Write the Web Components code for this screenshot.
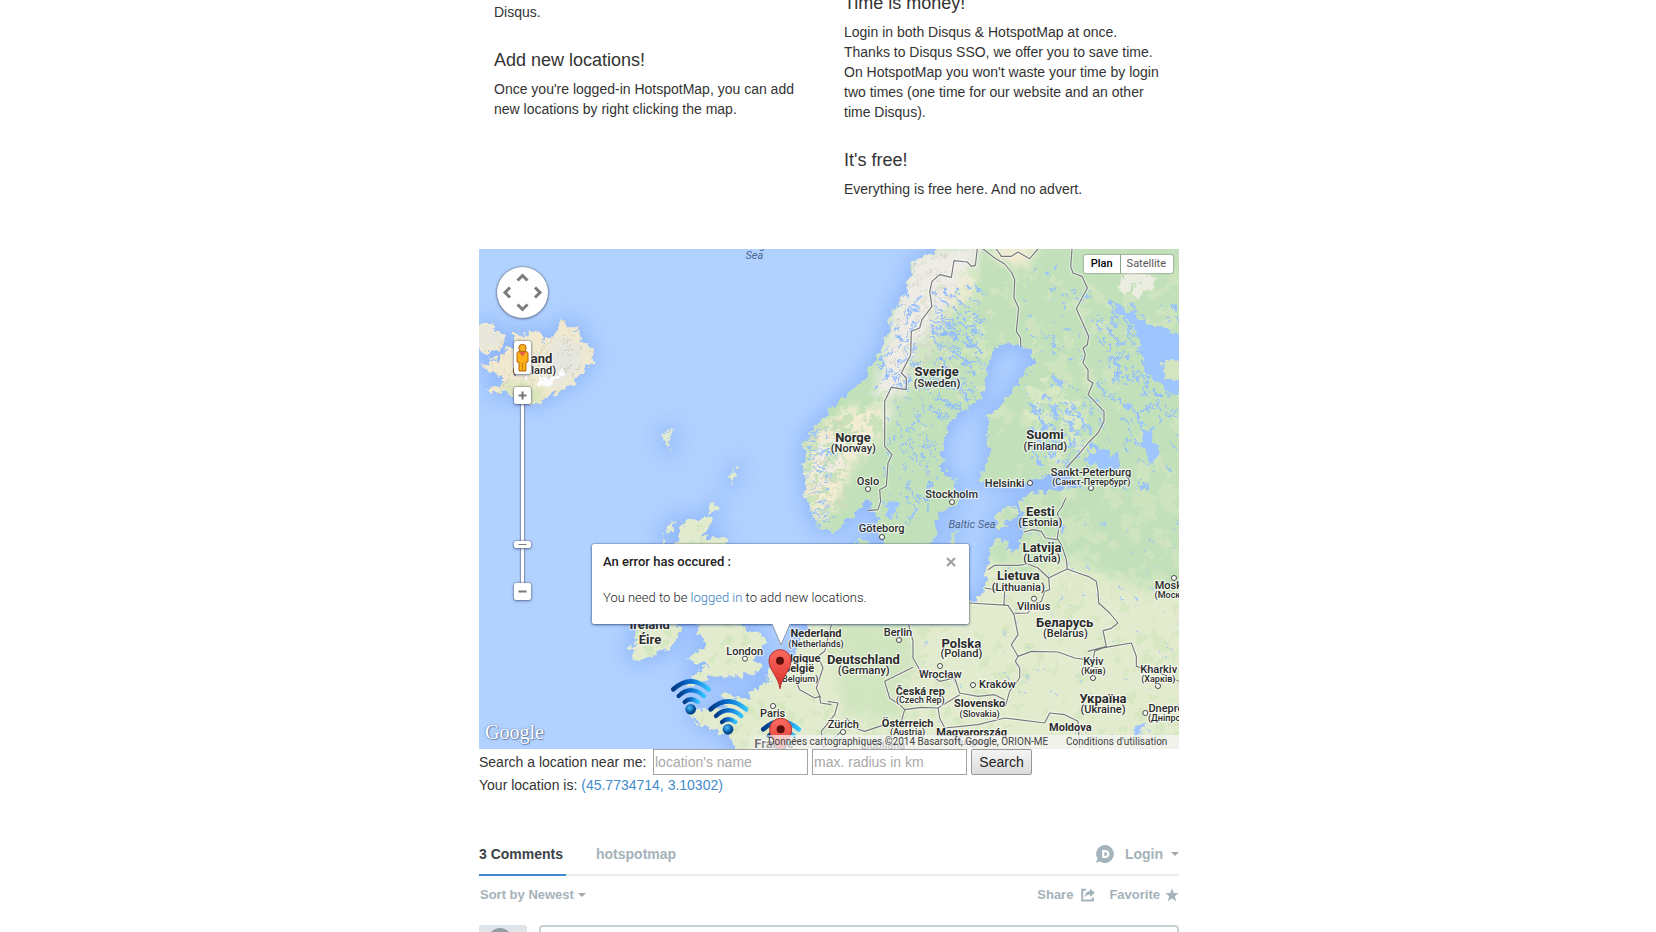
<!DOCTYPE html>
<html lang="en">
<head>
<meta charset="utf-8">
<title>HotspotMap</title>
<style>
  html, body { margin: 0; padding: 0; background: #fff; }
  body { font: 14px/20px "Liberation Sans", Arial, sans-serif; color: #333; height: 100vh; overflow: hidden; }
</style>
</head>
<body>
<hotspot-page></hotspot-page>

<template id="tpl-page">
  <style>
    :host { display: block; max-width: 700px; margin: 0 auto; padding-left: 2px; }
    .marketing { display: grid; grid-template-columns: 1fr 1fr; margin: -7px 0 50px; }
    .col { padding: 0 15px; display: flex; flex-direction: column; gap: 28px; }
    .tail { margin: 9px 0 0; }
  </style>
  <div class="marketing">
    <div class="col">
      <p class="tail">Disqus.</p>
      <info-block><span slot="title">Add new locations!</span>Once you're logged-in HotspotMap, you can add new locations by right clicking the map.</info-block>
    </div>
    <div class="col">
      <info-block><span slot="title">Time is money!</span>Login in both Disqus &amp; HotspotMap at once. Thanks to Disqus SSO, we offer you to save time. On HotspotMap you won't waste your time by login two times (one time for our website and an other time Disqus).</info-block>
      <info-block><span slot="title">It's free!</span>Everything is free here. And no advert.</info-block>
    </div>
  </div>
  <map-view>
    <map-popup>
      <span slot="title">An error has occured :</span>
      You need to be <a href="#login">logged in</a> to add new locations.
    </map-popup>
  </map-view>
  <location-search></location-search>
  <comment-thread></comment-thread>
</template>

<template id="tpl-info">
  <style>
    :host { display: block; }
    h4 { font-size: 18px; line-height: 20px; font-weight: 400; margin: 0 0 9px; }
    p { margin: 0; }
  </style>
  <h4><slot name="title"></slot></h4>
  <p><slot></slot></p>
</template>

<template id="tpl-popup">
  <style>
    :host { display: block; width: 377px; box-sizing: border-box; background: #fff; border-radius: 2px; padding: 9px 11px;
      height: 80px; font: 300 13px/18px Roboto, sans-serif; color: #222; box-shadow: 0 0 2px rgba(0,0,0,.5), 0 1px 3px rgba(30,60,130,.6); }
    header { display: flex; justify-content: space-between; align-items: center; height: 18px; margin-bottom: 18px; }
    strong { font-weight: 500; }
    button { border: 0; background: none; padding: 0; margin-right: 2px; height: 10px; width: 10px; display: block; }
    ::slotted(a) { color: #2f7cc0; text-decoration: none; }
    .tip { position: absolute; left: 178px; top: 79px; }
    svg { display: block; }
  </style>
  <header><strong><slot name="title"></slot></strong>
    <button aria-label="Close"><svg width="10" height="10" viewBox="0 0 10 10"><path d="M1 1l8 8M9 1l-8 8" stroke="#a2a2a2" stroke-width="2.2"/></svg></button>
  </header>
  <slot></slot>
  <svg class="tip" width="22" height="25" viewBox="0 0 22 25"><path d="M2 1L11 22L20 1" fill="#fff" stroke="#8e9aa8" stroke-width="1"/><path d="M2 0h18v1H2z" fill="#fff"/></svg>
</template>

<template id="tpl-search">
  <style>
    :host { display: block; margin-bottom: 50px; }
    form { display: flex; align-items: center; gap: 4px; height: 26px; }
    label { min-width: 170px; }
    input, button { font: inherit; box-sizing: border-box; height: 26px; margin: 0; }
    input { width: 155px; border: 1px solid #a3a3a3; padding: 0 1px; color: #333; min-width: 0; }
    input::placeholder { color: #a9a9a9; opacity: 1; }
    button { width: 61px; padding: 0; border: 1px solid #989898; border-radius: 2px; background: linear-gradient(#f4f4f4, #dcdcdc); color: #222; }
    p { margin: 0; }
    a { color: #428bca; text-decoration: none; }
  </style>
  <form>
    <label for="place">Search a location near me:</label>
    <input id="place" type="text" placeholder="location's name">
    <input type="text" aria-label="Radius" placeholder="max. radius in km">
    <button type="button">Search</button>
  </form>
  <p>Your location is: <a href="#here">(45.7734714, 3.10302)</a></p>
</template>

<template id="tpl-thread">
  <style>
    :host { display: block; font-weight: 700; color: #a5b2b9; }
    nav, .tools, .user, .right, .compose { display: flex; align-items: center; }
    nav { justify-content: space-between; border-bottom: 2px solid #e7eded; height: 29px; align-items: flex-start; }
    .tabs { display: flex; gap: 30px; line-height: 18px; }
    a { color: inherit; text-decoration: none; }
    .tabs a { height: 29px; border-bottom: 2px solid transparent; min-width: 87px; }
    .tabs .on { color: #3b4247; border-color: #4389cd; }
    button { all: unset; display: flex; align-items: center; }
    .user { gap: 10px; margin-top: -1px; }
    .user button { gap: 8px; }
    .tools { justify-content: space-between; font-size: 13px; height: 18px; margin: 10px 0 21px 1px; }
    .sort { gap: 4px; }
    .right { gap: 14px; }
    .fav { gap: 5px; } .share { gap: 8px; }
    .caret { width: 0; border: 4px solid transparent; border-top-color: #a5a9ac; border-bottom: 0; }
    .compose { align-items: flex-start; gap: 12px; }
    .avatar { width: 48px; height: 48px; border-radius: 3px; background: #dfe5e8; flex: none; }
    textarea { flex: 1; height: 70px; box-sizing: border-box; border: 2px solid #c8d1d5; border-radius: 4px; resize: none; min-width: 0; }
    svg { display: block; }
  </style>
  <nav>
    <div class="tabs"><a class="on" href="#comments">3 Comments</a><a href="#site">hotspotmap</a></div>
    <div class="user">
      <svg width="20" height="20" viewBox="0 0 20 20"><path d="M10.4 1A9 9 0 1 1 5 17.6L.8 18.8l1.8-4A9 9 0 0 1 10.4 1z" fill="#a5b4bc"/><path d="M8.2 7.1h1.9c2 0 3.2 1.1 3.2 2.9s-1.200 3-3.200 3H8.200z" fill="none" stroke="#fff" stroke-width="2.200"/></svg>
      <button>Login <i class="caret"></i></button>
    </div>
  </nav>
  <div class="tools">
    <button class="sort">Sort by Newest <i class="caret"></i></button>
    <div class="right">
      <button class="share">Share <svg width="14" height="14" viewBox="0 0 14 14"><path d="M5 1.800H1.200v10.800h10.600V9.500" fill="none" stroke="#a5b4bc" stroke-width="2"/><path d="M9 0.500l4.800 4.200L9 9V6.600C6.400 6.500 5 7.400 3.800 9.800 4 5.800 5.800 3.200 9 3z" fill="#a5b4bc"/></svg></button>
      <button class="fav">Favorite <svg width="14" height="14" viewBox="0 0 14 14"><path d="M7 .3l1.700 4.600 5 .2-3.900 3.100 1.400 5L7 10.400l-4.200 2.800 1.400-5L.3 5.100l5-.2z" fill="#a5b4bc"/></svg></button>
    </div>
  </div>
  <div class="compose">
    <svg class="avatar" viewBox="0 0 48 48"><circle cx="21" cy="15" r="12" fill="#929da5"/><path d="M4 48c0-16 34-16 34 0z" fill="#929da5"/></svg>
    <textarea aria-label="Join the discussion"></textarea>
  </div>
</template>

<template id="tpl-map">
  <style>
    :host { display: block; position: relative; height: 500px; overflow: hidden; background: #b1d1ff; font-family: Roboto, sans-serif; }
    .geo { display: block; width: 100%; height: 100%; }
    .geo text { font-family: Roboto, sans-serif; text-anchor: middle; fill: #2c2c2c; paint-order: stroke; stroke: rgba(255,255,255,.65); stroke-width: 7px; stroke-linejoin: round; }
    .geo .c { font-size: 39px; font-weight: 700; }
    .geo .m { font-size: 33px; font-weight: 700; }
    .geo .p { font-size: 33px; font-weight: 500; }
    .geo .s { font-size: 27px; font-weight: 500; }
    .geo .w { font-size: 33px; font-style: italic; font-weight: 400; fill: #4d668c; stroke: none; }
    .ctl { position: absolute; left: 18px; top: 18px; width: 51px; display: flex; flex-direction: column; align-items: center; }
    .ctl button { border: 0; padding: 0; background: #fff; border-radius: 2px; box-shadow: 0 0 2px #555, 0 1px 3px rgba(30,50,110,.5); width: 17px; position: relative; }
    .ctl svg { display: block; }
    .ctl .pan { width: 51px; height: 51px; border-radius: 50%; margin-bottom: 23px; }
    .ctl .peg { height: 33px; margin-bottom: 13px; }
    .ctl .z { height: 17px; }
    .rail { width: 3px; height: 179px; background: #fff; box-shadow: 0 0 1px 1px #8295b9; display: flex; flex-direction: column; align-items: center; justify-content: flex-end; }
    .ctl .knob { height: 7px; margin-bottom: 35px; flex: none; }
    .type { position: absolute; top: 6px; right: 6px; display: flex; box-shadow: 0 0 2px #555; background: #fff; border-radius: 2px; }
    .type button { border: 0; background: none; height: 18px; font: 400 11px/18px Roboto, sans-serif; color: #565656; padding: 0 7px 0 6px; }
    .type .on { font-weight: 500; color: #000; border-right: 1px solid #86a588; padding: 0 7px; }
    .brand { position: absolute; left: 6px; bottom: 6px; font: 20px/22px "Liberation Serif", serif; color: #fff; text-shadow: 0 0 2px #56709c, 1px 1px 1px #7089b5; }
    .legal { position: absolute; right: 0; bottom: 0; display: flex; font-size: 10px; line-height: 14px; color: #444; background: linear-gradient(90deg, rgba(245,245,245,0), rgba(245,245,245,.75) 40px); padding: 0 6px 0 30px; gap: 12px; white-space: nowrap; }
    .legal span { min-width: 286px; }
    .legal a { color: #444; text-decoration: none; min-width: 107px; }
    ::slotted(map-popup) { position: absolute; left: calc(50% - 237px); top: 295px; }
  </style>
  <svg class="geo" viewBox="3 3 2100 1500" preserveAspectRatio="xMidYMid slice" role="img" aria-label="Map of northern Europe">
    <defs>
      <filter id="rough" x="0" y="0" width="100%" height="100%" color-interpolation-filters="sRGB"><feTurbulence type="fractalNoise" baseFrequency=".045" numOctaves="3" seed="4"/><feDisplacementMap in="SourceGraphic" scale="38" xChannelSelector="R" yChannelSelector="G"/></filter>
      <filter id="shelf"><feGaussianBlur stdDeviation="30"/></filter>
      <filter id="soft"><feGaussianBlur stdDeviation="14"/></filter>
      <linearGradient id="wf"><stop offset="0" stop-color="#003a86"/><stop offset=".5" stop-color="#0a6fd0"/><stop offset="1" stop-color="#35c3ff"/></linearGradient>
      <radialGradient id="dot" cx=".4" cy=".35"><stop offset="0" stop-color="#4cc0ff"/><stop offset="1" stop-color="#00478f"/></radialGradient>
      <linearGradient id="pin" x2="0" y2="1"><stop offset="0" stop-color="#fc6a60"/><stop offset="1" stop-color="#d9302a"/></linearGradient>
      <path id="land" d="M1420 -30L1375 10 1340 25 1300 50 1305 75 1285 100 1295 130 1262 150 1240 195 1232 235 1215 290 1205 320 1180 345 1160 390 1120 430 1085 455 1050 492 1020 525 985 560 975 600 990 620 975 655 985 690 978 730 988 760 1005 790 1000 810 1030 840 1060 850 1090 835 1120 800 1150 780 1172 745 1180 780 1198 810 1205 860 1230 900 1260 960 1330 960 1350 900 1372 870 1372 820 1395 785 1430 770 1445 750 1430 720 1432 695 1400 680 1390 640 1395 590 1405 550 1425 510 1470 480 1505 450 1525 400 1530 350 1545 315 1560 290 1610 288 1660 305 1668 345 1640 370 1610 425 1560 480 1530 505 1528 560 1538 620 1520 665 1500 690 1540 712 1620 712 1690 690 1750 668 1810 700 1820 722 1780 722 1730 722 1660 735 1620 765 1640 800 1635 850 1625 905 1598 912 1575 872 1540 885 1528 950 1523 1015 1520 1030 1500 1050 1478 1066 1430 1050 1300 1080 1190 1060 1160 1010 1150 950 1175 880 1150 872 1130 890 1120 1000 1110 1080 1000 1110 975 1160 960 1200 930 1235 875 1265 862 1310 815 1330 812 1348 770 1352 735 1338 748 1380 700 1383 655 1385 635 1400 660 1425 700 1440 745 1462 770 1480 765 1540H2130V-30z"/>
      <path id="isles" d="M-5 250L12 235 18 225 40 226 46 244 60 243 75 265 77 290 62 312 40 305 30 325 55 330 50 345 3 350 18 362 50 370 60 385 88 395 72 410 28 420 30 438 70 430 100 440 130 458 160 472 190 460 212 440 235 437 260 415 290 402 318 370 340 342 340 302 320 285 303 258 285 255 303 232 280 240 264 238 255 216 240 225 240 250 225 267 205 265 195 290 188 262 175 262 170 250 150 250 138 270 120 255 107 255 110 285 88 298 60 345 0 300z
        M625 818L690 806 700 815 690 842 668 868 740 868 742 885 700 920 740 1000 790 1128 810 1150 850 1152 864 1180 830 1238 852 1252 840 1275 760 1288 690 1285 655 1312 622 1318 640 1290 665 1268 690 1252 645 1240 632 1225 672 1200 680 1175 655 1150 665 1132 625 1110 610 1060 640 1020 600 980 610 930 590 890z
        M480 1100L470 1150 482 1190 450 1200 462 1228 482 1238 540 1220 590 1190 602 1150 588 1100 540 1080z
        M590 815L562 835 560 858 585 850z M555 872l-6 14 14-2z M706 765l14 8-12 16-18 10 4-18z
        M548 562l38-16-10 22-16 8z M566 572l10 2 2 14-10 0z M568 600l8 16-6-2z M770 665l6-8-4 30-12 28-8-28-6 2z
        M1575 785l30-8 20 12-14 22-30 2-14 32-14-8 10-20-16-10z M1435 855l10-6-16 34-12 6 2-22z"/>
    </defs>
    <rect x="0" y="0" width="2110" height="1510" fill="#b1d1ff"/>
    <g filter="url(#shelf)" fill="#83adf8" stroke="#83adf8" stroke-width="26" opacity=".7"><use href="#land"/><use href="#isles"/></g>
    <g filter="url(#rough)">
      <g id="ground"></g>
    </g>
    <g id="lines" fill="none" stroke-linejoin="round"></g>
    <g id="labels"></g>
    <g id="pins"></g>
  </svg>
  <div class="ctl">
    <button class="pan" aria-label="Pan"><svg width="51" height="51" viewBox="0 0 51 51"><path d="M20.500 13.500l5-5 5 5M20.500 37.500l5 5 5-5M13 20.500l-5 5 5 5M38 20.500l5 5-5 5" fill="none" stroke="#7b7b7b" stroke-width="3"/></svg></button>
    <button class="peg" aria-label="Street view"><svg width="17" height="33" viewBox="0 0 17 33"><path d="M5 10.500h7q2 0 2 2V21h-2v9H5v-9H3v-8.500q0-2 2-2z" fill="#fcb116" stroke="#b8690c"/><path d="M8.500 22v8" stroke="#c97a0e"/><path d="M5 11h7l-3.500 4.500z" fill="#e8604c"/><circle cx="8.500" cy="7" r="3.700" fill="#f9ae1b" stroke="#b8690c"/></svg></button>
    <button class="z" aria-label="Zoom in"><svg width="17" height="17" viewBox="0 0 17 17"><path d="M4.500 8.500h8M8.500 4.500v8" stroke="#777" stroke-width="2"/></svg></button>
    <div class="rail"><button class="knob" aria-label="Zoom level"><svg width="17" height="7"><path d="M4.500 3.500h8" stroke="#777"/></svg></button></div>
    <button class="z" aria-label="Zoom out"><svg width="17" height="17" viewBox="0 0 17 17"><path d="M4.500 8.500h8" stroke="#777" stroke-width="2"/></svg></button>
  </div>
  <div class="type"><button class="on">Plan</button><button>Satellite</button></div>
  <div class="brand">Google</div>
  <div class="legal"><span>Données cartographiques ©2014 Basarsoft, Google, ORION-ME</span><a href="#terms">Conditions d'utilisation</a></div>
  <slot></slot>
</template>

<script>
const define = (name, tpl, setup) => customElements.define(name, class extends HTMLElement {
  constructor() {
    super();
    this.attachShadow({ mode: "open" }).append(document.getElementById(tpl).content.cloneNode(true));
    if (setup) setup(this.shadowRoot);
  }
});

// Small repeatable generator, so that the terrain is the same on every load.
function random(seed) {
  return () => (seed = (seed * 16807) % 2147483647) / 2147483647;
}

const BORDERS = [
  "M1498 3L1492 52 1480 55 1468 42 1428 38 1420 88 1385 80 1362 100 1355 130 1362 175 1332 215 1325 240 1300 250 1298 320 1270 375 1285 390 1285 425 1240 418 1220 460 1220 595 1242 620 1230 645 1225 715 1205 725 1208 760 1200 785 1168 788",
  "M1515 3L1550 30 1580 48 1602 75 1610 95 1608 150 1622 180 1615 250 1628 270 1628 295",
  "M1555 3L1570 25 1600 25 1620 12 1655 32 1680 3",
  "M1782 3L1778 55 1785 75 1812 85 1828 120 1795 182 1832 265 1828 290 1815 300 1822 320 1815 345 1830 365 1830 395 1845 405 1830 440 1878 490 1878 520 1860 555 1830 585 1810 610 1765 660",
  "M1764 750L1750 780 1738 795 1745 820 1738 870 1752 895 1765 935 1768 965",
  "M1638 852L1665 845 1690 850 1702 870 1738 875",
  "M1530 965L1550 952 1620 952 1650 948 1680 960 1712 990 1742 975 1768 963 1800 975 1830 985 1855 1000 1860 1030 1862 1065 1895 1095 1920 1125 1898 1142 1875 1148 1885 1195 1830 1210",
  "M1712 990L1715 1025 1700 1030 1690 1060 1660 1080 1650 1095 1610 1096",
  "M1475 1065L1590 1072 1608 1100 1620 1160 1600 1190 1620 1225 1612 1240 1625 1260 1625 1290 1595 1330 1582 1375",
  "M1520 1020L1580 1030 1578 1070",
  "M1620 1225L1660 1210 1740 1212 1790 1230 1845 1238 1850 1210 1875 1200 1900 1195 1960 1185 1975 1225 1975 1255 2060 1280 2103 1300",
  "M1292 1130L1305 1180 1305 1230 1325 1265 1355 1280 1385 1300 1430 1290 1445 1335 1500 1345 1550 1340 1580 1355",
  "M1305 1258L1220 1300 1235 1350 1265 1370 1280 1385 1330 1378 1380 1380 1445 1340",
  "M1280 1385L1270 1420 1220 1430 1160 1450 1130 1440 1105 1410",
  "M1380 1380L1385 1410 1400 1440 1500 1430 1580 1410 1700 1425 1715 1395 1760 1400 1800 1420 1805 1500",
  "M940 1290L955 1300 965 1325 1010 1350 1025 1345 1028 1365 1060 1370",
  "M1060 1130L1040 1210 1020 1225 1035 1260 1015 1320 1028 1350",
  "M1050 1360L1080 1365 1070 1400 1030 1450 1035 1500 1090 1450"
];

// [text, x, y, class]; three units to the pixel.
const LABELS = [
  ["Norwegian", 828, 2, "w"], ["Sea", 829, 32, "w"],
  ["Ísland", 170, 346, "c"], ["(Iceland)", 169, 378, "p"],
  ["Sverige", 1376, 384, "c"], ["(Sweden)", 1377, 416, "p"],
  ["Norge", 1125, 583, "c"], ["(Norway)", 1126, 613, "p"],
  ["Suomi", 1701, 573, "c"], ["(Finland)", 1702, 605, "p"],
  ["Oslo", 1170, 710, "p", 1170, 723], ["Helsinki", 1580, 717, "p", 1656, 705],
  ["Stockholm", 1421, 750, "p", 1422, 762],
  ["Sankt-Peterburg", 1839, 684, "p", 1839, 720], ["(Санкт-Петербург)", 1840, 710, "s"],
  ["Göteborg", 1211, 853, "p", 1212, 867], ["Baltic Sea", 1482, 841, "w"],
  ["Eesti", 1687, 804, "c"], ["(Estonia)", 1687, 833, "p"],
  ["Latvija", 1692, 912, "c"], ["(Latvia)", 1692, 941, "p"],
  ["Lietuva", 1621, 996, "c"], ["(Lithuania)", 1621, 1028, "p"],
  ["Vilnius", 1667, 1087, "p", 1668, 1052],
  ["Беларусь", 1760, 1137, "c"], ["(Belarus)", 1762, 1168, "p"],
  ["Moskva", 2088, 1022, "p", 2088, 990], ["(Москва)", 2088, 1050, "s"],
  ["Berlin", 1260, 1163, "p", 1263, 1176], ["Polska", 1450, 1201, "c"], ["(Poland)", 1450, 1228, "p"],
  ["Wrocław", 1387, 1289, "p", 1386, 1254], ["Kraków", 1558, 1321, "p", 1485, 1311],
  ["Deutschland", 1156, 1248, "c"], ["(Germany)", 1157, 1279, "p"],
  ["Česká rep", 1327, 1340, "m"], ["(Czech Rep)", 1327, 1364, "s"],
  ["Slovensko", 1505, 1378, "m"], ["(Slovakia)", 1505, 1406, "s"],
  ["Kyiv", 1846, 1250, "p", 1845, 1290], ["(Київ)", 1846, 1277, "s"],
  ["Kharkiv", 2042, 1275, "p", 2040, 1314], ["(Харків)", 2041, 1301, "s"],
  ["Україна", 1875, 1364, "c"], ["(Ukraine)", 1875, 1396, "p"],
  ["Dnepropetrovsk", 2128, 1393, "p", 2002, 1395], ["(Дніпропетровськ)", 2130, 1418, "s"],
  ["Moldova", 1777, 1450, "m"],
  ["Österreich", 1289, 1436, "m"], ["(Austria)", 1289, 1462, "s"],
  ["Magyarország", 1481, 1464, "m"], ["(Hungary)", 1481, 1492, "s"],
  ["Zürich", 1096, 1439, "p", 1095, 1452], ["Ljubljana", 1215, 1502, "p"],
  ["Ireland", 515, 1142, "c"], ["Éire", 516, 1187, "c"],
  ["London", 800, 1220, "p", 801, 1232], ["Paris", 884, 1407, "p", 885, 1374],
  ["Nederland", 1014, 1168, "m"], ["(Netherlands)", 1014, 1196, "s"],
  ["Belgique", 962, 1243, "m"], ["België", 962, 1272, "m"], ["(Belgium)", 962, 1301, "s"],
  ["France", 888, 1501, "c"]
];

function terrain() {
  const rnd = random(77), out = [];
  const blotch = (n, x, y, w, h, color, size, alpha) => {
    let d = "";
    for (let i = 0; i < n; i++) {
      const px = x + rnd() * w, py = y + rnd() * h, r = size * (.3 + rnd());
      d += `M${px | 0} ${py | 0}l${r | 0} ${(r * (rnd() - .3)) | 0} ${(-r * rnd()) | 0} ${r | 0} ${(-r * .8) | 0} ${(-r * rnd()) | 0}z`;
    }
    out.push(`<path d="${d}" fill="${color}" opacity="${alpha}"/>`);
  };
  const streaks = (n, x, y, w, h, dx, dy, color, width) => {
    let d = "";
    for (let i = 0; i < n; i++) {
      const v = rnd(), l = .3 + rnd();
      d += `M${(x + rnd() * w) | 0} ${(y + v * h) | 0}l${(dx * l) | 0} ${(dy * l * (.5 + rnd())) | 0}`;
    }
    out.push(`<path d="${d}" stroke="${color}" stroke-width="${width}" fill="none"/>`);
  };
  out.push('<rect x="0" y="0" width="2110" height="1510" fill="#e2ebcd"/>');
  out.push('<path filter="url(#soft)" fill="#c2e1bb" d="M960 -30H2140V1010Q2060 1060 1960 1010L1830 960 1720 930 1640 1000 1540 940 1480 860 1360 920 1100 920 960 820z"/>');
  out.push('<path filter="url(#soft)" fill="#d0e5c0" d="M1050 1100L1290 1120 1320 1260 1240 1330 1300 1420 1100 1400z"/>');
  out.push('<path filter="url(#soft)" fill="#f1ecd2" d="M1560 -10H1690L1640 60 1540 30zM1440 60L1500 90 1480 150 1420 180 1340 330 1290 430 1200 470 1100 480 1000 560 970 760 1010 830 1080 780 1120 660 1210 560 1230 460 1300 400z"/>');
  out.push('<path filter="url(#soft)" fill="#eeece5" d="M1310 20L1510 -10 1490 60 1460 90 1400 190 1310 310 1280 430 1190 460 1220 300 1260 140zM1010 600L1080 560 1090 640 1030 740zM1220 480L1250 490 1220 540z"/>');
  out.push('<path fill="#f0e9cf" d="M0 210H345V475H0z"/><path filter="url(#soft)" fill="#e6e6e0" d="M0 240H70V300H0zM240 260L320 300 300 380 230 420 190 350z"/><path fill="#fbfcfe" d="M170 375L225 385 265 362 258 385 215 412 190 410zM130 382l22-4-8 20z"/><path filter="url(#soft)" fill="#d5e4b8" d="M60 410L120 400 200 430 190 470 100 445z"/>');
  blotch(90, 1330, 60, 220, 500, "#d8e8c3", 22, .6);
  blotch(140, 1540, 60, 560, 640, "#d7e7c2", 30, .55);
  blotch(45, 1640, 380, 160, 240, "#e4ecca", 26, .6);
  blotch(150, 1480, 700, 620, 340, "#d8e8c2", 34, .55);
  blotch(260, 1050, 1050, 1050, 450, "#cfe4ba", 24, .6);
  blotch(60, 600, 800, 260, 520, "#d0e5bb", 22, .7);
  blotch(60, 640, 1330, 430, 170, "#cfe4ba", 24, .6);
  blotch(20, 460, 1100, 140, 140, "#d0e5bb", 20, .7);
  blotch(90, 985, 500, 120, 330, "#bfe0b4", 17, .8);
  blotch(50, 1050, 430, 170, 130, "#bfe0b4", 22, .8);
  blotch(16, 1920, 60, 90, 70, "#f0eee4", 26, .9);
  streaks(230, 1230, 30, 180, 400, 14, -14, "#cdcbc3", 2);
  streaks(130, 1260, 60, 170, 330, 12, 10, "#dcd9cf", 3);
  streaks(110, 990, 520, 110, 300, 12, -10, "#dcd6bd", 3);
  streaks(150, 10, 220, 330, 230, 10, -12, "#d0ccba", 3);
  streaks(115, 1350, 100, 150, 390, 30, 24, "#8fbbff", 4);
  streaks(50, 1240, 330, 130, 330, 8, 26, "#8fbbff", 3);
  streaks(60, 1210, 480, 180, 340, 8, 14, "#8fbbff", 4);
  streaks(130, 1655, 460, 190, 190, 12, 14, "#97c0ff", 6);
  streaks(80, 1640, 60, 280, 420, 12, 9, "#94beff", 4);
  streaks(110, 1860, 160, 240, 330, 14, 22, "#94beff", 6);
  streaks(50, 1860, 450, 240, 270, 12, 14, "#94beff", 5);
  streaks(70, 1560, 820, 540, 300, 9, 9, "#94beff", 3);
  streaks(60, 1300, 1120, 790, 370, 11, 8, "#9cc3f8", 3);
  streaks(70, 975, 520, 70, 320, 24, -4, "#8fbbff", 3);
  streaks(90, 1190, 130, 120, 300, 16, -18, "#8fbbff", 4);
  out.push(`<g fill="#9fc5ff">
    <path d="M1908 168L1950 188 2010 230 2060 238 2110 262V440L2070 430 2045 402 2018 390 1995 362 1992 285 1955 225 1925 200z"/>
    <path d="M2055 340L2110 335V398L2075 392 2050 372z" fill="#d2e5c0"/>
    <path d="M1838 612L1870 600 1900 612 1925 640 1925 660 1890 668 1850 655 1830 642z"/>
    <path d="M1980 505L2005 545 2025 538 2022 580 2045 605 2040 645 2022 650 2008 612 1978 590 1995 570z"/>
    <path d="M1735 835L1750 830 1768 850 1755 862zM1720 380l30 12 10 18-28-2zM1940 465l24 2-2 20-22-2zM1225 765l28-6 8 20-24 28-14-10zM1290 800l20-24 8 4-16 34z"/>
    <path d="M1868 820l16 2-4 14zM1960 1440l30-12 25-3-22 14-20 22z"/></g>`);
  return out.join("");
}

define("map-view", "tpl-map", root => {
  const q = id => root.getElementById(id);
  q("ground").innerHTML = `<clipPath id="clip"><use href="#land"/><use href="#isles"/></clipPath><g clip-path="url(#clip)">${terrain()}</g>`;
  const d = BORDERS.join("");
  q("lines").innerHTML = `<path d="${d}" stroke="#fff" stroke-opacity=".5" stroke-width="10"/><path d="${d}" stroke="#77797a" stroke-width="3.500"/>`;
  q("labels").innerHTML = LABELS.map(([t, x, y, c, cx, cy]) =>
    (cx ? `<circle cx="${cx}" cy="${cy}" r="7.500" fill="#fff" stroke="#444" stroke-width="3"/>` : "") +
    `<text x="${x}" y="${y}" class="${c}">${t}</text>`).join("");
  const wifi = (x, y) => `<g transform="translate(${x} ${y})" fill="none" stroke="url(#wf)" stroke-width="13" stroke-linecap="round">
    <path d="M-52 -60Q0 -108 54 -60" stroke-width="14"/><path d="M-36 -40Q0 -74 40 -40"/><path d="M-18 -22Q0 -38 22 -22"/>
    <circle r="16" fill="url(#dot)" stroke="none"/></g>`;
  const pin = (x, y) => `<path d="M${x} ${y + 84}C${x - 4} ${y + 50} ${x - 33} ${y + 28} ${x - 33} ${y}a33 33 0 0 1 66 0C${x + 33} ${y + 28} ${x + 4} ${y + 50} ${x} ${y + 84}z" fill="url(#pin)" stroke="#b5352f" stroke-width="3"/><circle cx="${x}" cy="${y}" r="12" fill="#5c0f0c"/>`;
  q("pins").innerHTML = wifi(638, 1384) + wifi(750, 1444) + wifi(908, 1504) + pin(906, 1238) + pin(908, 1444);
});
define("map-popup", "tpl-popup");
define("info-block", "tpl-info");
define("location-search", "tpl-search");
define("comment-thread", "tpl-thread");
define("hotspot-page", "tpl-page");
</script>
</body>
</html>
